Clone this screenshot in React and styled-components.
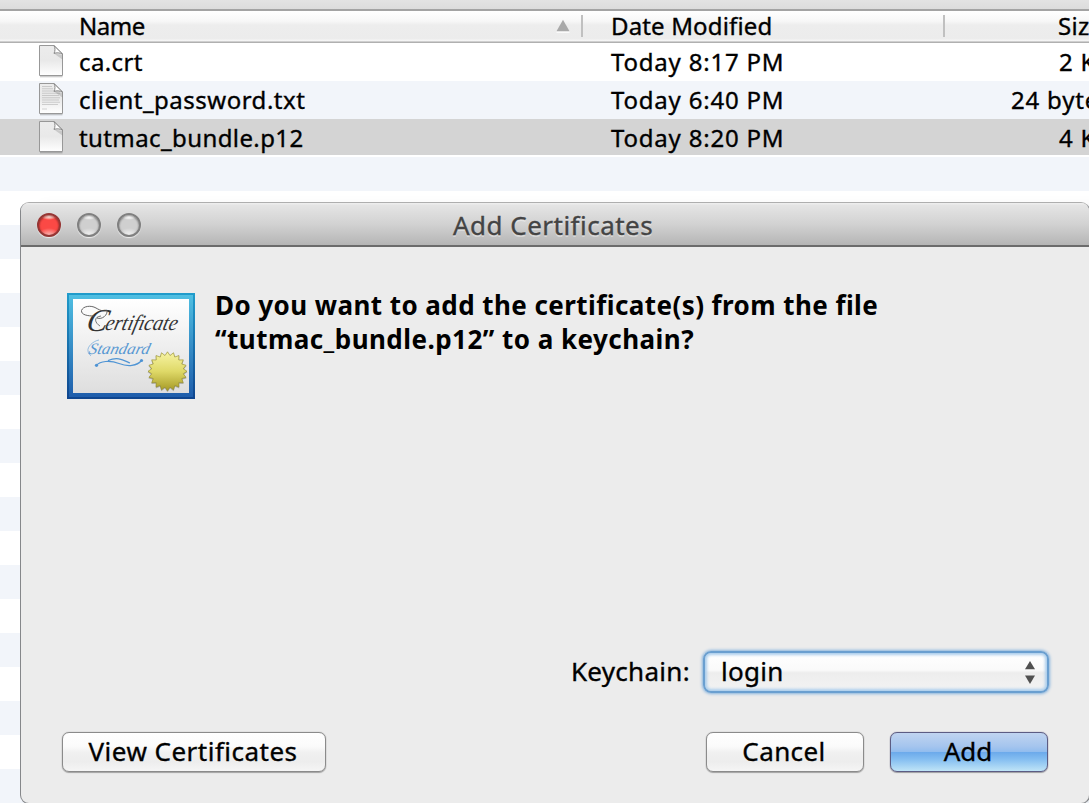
import React from "react";
import styled, { createGlobalStyle, css } from "styled-components";

const GlobalStyle = createGlobalStyle`
  * { box-sizing: border-box; }
  html, body { margin: 0; height: 100%; overflow: hidden; background: #fff; }
  body {
    font-family: "Noto Sans", "Open Sans", sans-serif;
    font-size: 24px;
    color: #000;
    -webkit-text-stroke: 0.35px currentColor;
  }
`;

const Desktop = styled.div`
  position: relative;
  width: 1089px;
  height: 803px;
  overflow: hidden;
  background: #fff;
`;

const Toolbar = styled.div`
  height: 9px;
  background: linear-gradient(#e3e3e3, #dcdcdc);
`;

const grid = css`
  display: grid;
  grid-template-columns: 583px 362px 250px;
  width: 1195px;
`;

const HeaderRow = styled.div`
  ${grid}
  height: 34px;
  border-top: 2px solid #a3a3a3;
  border-bottom: 1px solid #b0b0b0;
  box-shadow: inset 0 -1px 0 #cfcfcf;
  background: linear-gradient(#ffffff 0, #f7f7f7 33%, #ededed 45%, #ececec 88%, #fafafa 100%);
`;

const HeaderCell = styled.div`
  position: relative;
  display: flex;
  align-items: center;
  justify-content: space-between;
  height: 30px;
  line-height: 30px;
  padding: 0 12px 0 ${(p) => p.$indent}px;
  letter-spacing: ${(p) => p.$track || 0}px;

  &:not(:last-child)::after {
    content: "";
    position: absolute;
    right: 0;
    top: 4px;
    width: 2px;
    height: 22px;
    background: #c0c0c0;
  }
`;

const FileRow = styled.div`
  ${grid}
  height: ${(p) => (p.$selected ? 36 : 38)}px;
  margin-bottom: ${(p) => (p.$selected ? 2 : 0)}px;
  line-height: 38px;
  background: ${(p) => (p.$selected ? "#d4d4d4" : p.$striped ? "#f2f5fa" : "#fff")};
`;

const NameCell = styled.div`
  display: flex;
  gap: 15px;
  padding-left: 38px;
  white-space: nowrap;
  letter-spacing: ${(p) => p.$track}px;
  svg { flex: none; margin-top: 1px; }
`;

const DateCell = styled.div`
  padding-left: 28px;
  letter-spacing: 0.8px;
`;

const SizeCell = styled.div`
  padding-left: ${(p) => p.$indent}px;
  letter-spacing: 0.8px;
  white-space: nowrap;
`;

const EmptyRow = styled.div`
  height: 34px;
  background: ${(p) => (p.$striped ? "#f2f5fa" : "#fff")};
`;

const Window = styled.section`
  position: absolute;
  left: 20px;
  top: 202px;
  width: 1070px;
  height: 602px;
  display: flex;
  flex-direction: column;
  border: 1px solid #85878a;
  border-top-color: #aeaeae;
  border-radius: 9px;
  overflow: hidden;
  background: #ececec;
  box-shadow: 16px 0 14px -4px rgba(0, 0, 0, 0.06);
`;

const TitleBar = styled.header`
  display: grid;
  grid-template-columns: 150px 1fr;
  height: 44px;
  flex: none;
  border-bottom: 2px solid #6b6b6b;
  background: linear-gradient(#efefef 0, #e4e4e4 6%, #d2d2d2 50%, #b5b5b5 100%);
`;

const Lights = styled.div`
  display: flex;
  gap: 16px;
  padding: 10px 0 0 16px;
`;

const Light = styled.span`
  width: 24px;
  height: 24px;
  border-radius: 50%;
  border: 2px solid ${(p) => (p.$red ? "#963634" : "#808080")};
  background: ${(p) =>
    p.$red
      ? "radial-gradient(ellipse 8px 3px at 50% 16%, #ffe5e0 0, rgba(255,190,180,0.7) 55%, transparent 100%), radial-gradient(ellipse 12px 9px at 50% 100%, #ffd6d3, transparent), radial-gradient(circle, #fb4945 45%, #c3312f 100%)"
      : "radial-gradient(ellipse 8px 3px at 50% 16%, #ffffff 0, rgba(255,255,255,0.6) 55%, transparent 100%), radial-gradient(ellipse 12px 9px at 50% 100%, #ffffff, transparent), radial-gradient(circle, #cfcfcf 45%, #aaaaaa 100%)"};
  background-origin: border-box;
  box-shadow: 0 1px 1px rgba(255, 255, 255, 0.75), inset 0 1px 2px rgba(0, 0, 0, 0.35);
`;

const Title = styled.h1`
  margin: 0;
  padding-left: 282px;
  font-size: 26px;
  font-weight: 400;
  line-height: 44px;
  color: #444;
  letter-spacing: ${(p) => p.$track}px;
  text-shadow: 0 2px 0 rgba(255, 255, 255, 0.4);
`;

const Body = styled.div`
  flex: 1;
  display: flex;
  flex-direction: column;
  padding: 41px 41px 31px;
`;

const Prompt = styled.div`
  flex: 1;
  display: flex;
  gap: 20px;
  padding-left: 5px;
  svg { flex: none; margin-top: 5px; }
`;

const Message = styled.p`
  margin: 0;
  font-size: 26px;
  font-weight: 700;
  line-height: 34px;
  white-space: nowrap;
  -webkit-text-stroke-width: 0;
`;

const Line = styled.span`
  display: block;
  letter-spacing: ${(p) => p.$track}px;
`;

const Field = styled.div`
  display: flex;
  justify-content: flex-end;
  align-items: center;
  gap: 13px;
  height: 42px;
  margin: 0 -1px 39px 0;
  font-size: 26px;
  letter-spacing: 0.3px;
`;

const FieldLabel = styled.label`
  padding-bottom: 2px;
`;

const Popup = styled.div`
  display: flex;
  align-items: center;
  justify-content: space-between;
  width: 346px;
  height: 42px;
  padding: 0 12px 2px 16px;
  border: 2px solid #6a9fd0;
  border-radius: 8px;
  background: linear-gradient(#fff 0, #fafafa 45%, #ededed 52%, #f3f3f3 100%);
  box-shadow: 0 0 3px 1px #86b3de, inset 0 0 3px 2px #a9cdec;
  svg { margin-top: 2px; }
`;

const Buttons = styled.footer`
  display: flex;
  gap: 26px;
`;

const Button = styled.button`
  width: ${(p) => p.$width}px;
  height: 40px;
  padding: 0 2px 2px 0;
  border: 1px solid ${(p) => (p.$primary ? "#5c5c83" : "#8b8b8b")};
  border-radius: 7px;
  font: inherit;
  font-size: 26px;
  line-height: 36px;
  color: #000;
  letter-spacing: ${(p) => p.$track || 0}px;
  background: ${(p) =>
    p.$primary
      ? "linear-gradient(#c0d4f0 0, #a5c5ee 35%, #92bdee 49%, #6caaeb 51%, #86bff1 70%, #bfe4f7 100%)"
      : "linear-gradient(#fff 0, #fbfbfb 35%, #f0f0f0 52%, #ededed 75%, #f5f5f5 100%)"};
  box-shadow: 0 0 1px ${(p) => (p.$primary ? "#5c5c83" : "#8b8b8b")}, 0 1px 1px rgba(0, 0, 0, 0.3);
  -webkit-text-stroke: inherit;
  &:first-child { margin-right: auto; }
`;

function FileIcon({ lines }) {
  const widths = [10, 11, 18, 18, 17, 18, 17, 18, 16, 0, 5];
  return (
    <svg width="26" height="36" viewBox="0 0 26 36">
      <defs>
        <linearGradient id="sheet" x1="0" y1="0" x2="0" y2="1">
          <stop offset="0" stopColor="#ececec" />
          <stop offset="0.5" stopColor="#e9e9e9" />
          <stop offset="1" stopColor="#ffffff" />
        </linearGradient>
        <linearGradient id="fold" x1="0" y1="1" x2="1" y2="0">
          <stop offset="0.4" stopColor="#ffffff" />
          <stop offset="1" stopColor="#d8d8d8" />
        </linearGradient>
      </defs>
      <path d="M2 32.6H24.5" stroke="#000" strokeOpacity="0.2" strokeWidth="1.5" />
      <path d="M1.5 1.5H16L24.5 10V31.5H1.5Z" fill="url(#sheet)" stroke="#989898" strokeWidth="1" strokeLinejoin="round" />
      {lines &&
        widths.map((w, i) => (
          <path key={i} d={`M4 ${4.5 + i * 2.25}h${w}`} stroke="#a0a0a0" strokeOpacity="0.5" strokeWidth="0.9" />
        ))}
      <path d="M16 9.5L24.3 10.7V15.5Z" fill="#000" opacity="0.14" />
      <path d="M16 1.6C17.4 4 17.2 7 16 9.4C18.4 8.6 21.8 8.6 24.5 10Z" fill="url(#fold)" stroke="#858585" strokeWidth="1" />
    </svg>
  );
}

function SortArrow() {
  return (
    <svg width="16" height="14" viewBox="0 0 16 14">
      <path d="M1.5 13H14.5" stroke="#fff" strokeWidth="1.5" />
      <path d="M8 .8L14.5 12.2H1.5Z" fill="#a9a9a9" />
    </svg>
  );
}

function PopupArrows() {
  return (
    <svg width="10" height="23" viewBox="0 0 10 23">
      <path d="M5 0L10 8.2H0Z" fill="#505050" />
      <path d="M5 23L10 14.5H0Z" fill="#505050" />
    </svg>
  );
}

function sealPoints(cx, cy, outer, inner, count) {
  return Array.from({ length: count * 2 }, (_, i) => {
    const r = i % 2 ? inner : outer;
    const a = (Math.PI * i) / count - Math.PI / 2;
    return `${(cx + r * Math.cos(a)).toFixed(2)},${(cy + r * Math.sin(a)).toFixed(2)}`;
  }).join(" ");
}

function CertificateIcon() {
  return (
    <svg width="128" height="107" viewBox="0 0 128 107">
      <defs>
        <linearGradient id="edge" x1="0" y1="0" x2="0" y2="1">
          <stop offset="0" stopColor="#209ccb" />
          <stop offset="1" stopColor="#0f458e" />
        </linearGradient>
        <linearGradient id="frame" x1="0" y1="0" x2="0" y2="1">
          <stop offset="0" stopColor="#4fbfe2" />
          <stop offset="1" stopColor="#1e5dab" />
        </linearGradient>
        <linearGradient id="paper" x1="0" y1="0" x2="0" y2="1">
          <stop offset="0" stopColor="#ffffff" />
          <stop offset="1" stopColor="#dedede" />
        </linearGradient>
        <linearGradient id="gold" x1="0" y1="0" x2="0" y2="1">
          <stop offset="0" stopColor="#f7f4a4" />
          <stop offset="0.5" stopColor="#dfd968" />
          <stop offset="1" stopColor="#a69a25" />
        </linearGradient>
      </defs>
      <rect width="128" height="106" fill="url(#edge)" />
      <rect x="2" y="2" width="124" height="102" fill="url(#frame)" />
      <rect x="6" y="6" width="116" height="94" fill="url(#paper)" />
      <g fontFamily="'Liberation Serif', serif" fontStyle="italic" fontWeight="400">
        <g transform="translate(0 38) skewX(-14)">
          <text x="18" y="0" fontSize="32" fill="#333" textLength="21" lengthAdjust="spacingAndGlyphs">C</text>
          <text x="37" y="-1" fontSize="22" fill="#333" textLength="72" lengthAdjust="spacingAndGlyphs">ertificate</text>
        </g>
        <g transform="translate(0 60.5) skewX(-14)">
          <text x="21" y="0" fontSize="16" fill="#5898d2" textLength="61" lengthAdjust="spacingAndGlyphs">Standard</text>
        </g>
      </g>
      <path d="M27 23C21 23 14 22 14.5 17.5C16 13 24 12 29 15C34 18 38 19 40 17C41 22 35 27 30 25" fill="none" stroke="#555" strokeWidth="0.9" />
      <path d="M33 33C28 30 26 24 34 23" fill="none" stroke="#555" strokeWidth="0.8" />
      <path d="M32 47C26 48 20 54 21 58C21 60 23 62 24 63" fill="none" stroke="#6fa7da" strokeWidth="0.7" />
      <path d="M29.5 72.3C33 68 43 67 52 70.5S70 73 74.5 67.5M41 67.5C51 63.5 56 67 63 70" fill="none" stroke="#4f94d4" strokeWidth="1.2" />
      <circle cx="29.5" cy="72.3" r="1.6" fill="#4f94d4" />
      <circle cx="74.5" cy="67.5" r="1.6" fill="#4f94d4" />
      <polygon points={sealPoints(100.5, 79.3, 20, 16.3, 20)} fill="#000" opacity="0.22" />
      <polygon points={sealPoints(100.5, 78.3, 19.5, 16, 20)} fill="url(#gold)" stroke="#8f8624" strokeWidth="0.6" />
    </svg>
  );
}

const files = [
  { name: "ca.crt", track: 0.4, date: "Today 8:17 PM", size: "2 KB", indent: 114 },
  { name: "client_password.txt", track: 0.5, date: "Today 6:40 PM", size: "24 bytes", indent: 66, lines: true, striped: true },
  { name: "tutmac_bundle.p12", track: 0.4, date: "Today 8:20 PM", size: "4 KB", indent: 114, selected: true },
];

export default function App() {
  return (
    <Desktop>
      <GlobalStyle />
      <Toolbar />
      <HeaderRow>
        <HeaderCell $indent={79} $track={-0.5}>
          Name
          <SortArrow />
        </HeaderCell>
        <HeaderCell $indent={28} $track={0.15}>Date Modified</HeaderCell>
        <HeaderCell $indent={113} $track={0.3}>Size</HeaderCell>
      </HeaderRow>
      {files.map((f) => (
        <FileRow key={f.name} $striped={f.striped} $selected={f.selected}>
          <NameCell $track={f.track}>
            <FileIcon lines={f.lines} />
            {f.name}
          </NameCell>
          <DateCell>{f.date}</DateCell>
          <SizeCell $indent={f.indent}>{f.size}</SizeCell>
        </FileRow>
      ))}
      {Array.from({ length: 19 }, (_, i) => (
        <EmptyRow key={i} $striped={i % 2 === 0} />
      ))}
      <Window>
        <TitleBar>
          <Lights>
            <Light $red />
            <Light />
            <Light />
          </Lights>
          <Title $track={0.48}>Add Certificates</Title>
        </TitleBar>
        <Body>
          <Prompt>
            <CertificateIcon />
            <Message>
              <Line $track={0.43}>Do you want to add the certificate(s) from the file</Line>
              <Line $track={0.46}>“tutmac_bundle.p12” to a keychain?</Line>
            </Message>
          </Prompt>
          <Field>
            <FieldLabel>Keychain:</FieldLabel>
            <Popup>
              login
              <PopupArrows />
            </Popup>
          </Field>
          <Buttons>
            <Button $width={264} $track={0.48}>View Certificates</Button>
            <Button $width={158} $track={0.4}>Cancel</Button>
            <Button $width={158} $primary>Add</Button>
          </Buttons>
        </Body>
      </Window>
    </Desktop>
  );
}
